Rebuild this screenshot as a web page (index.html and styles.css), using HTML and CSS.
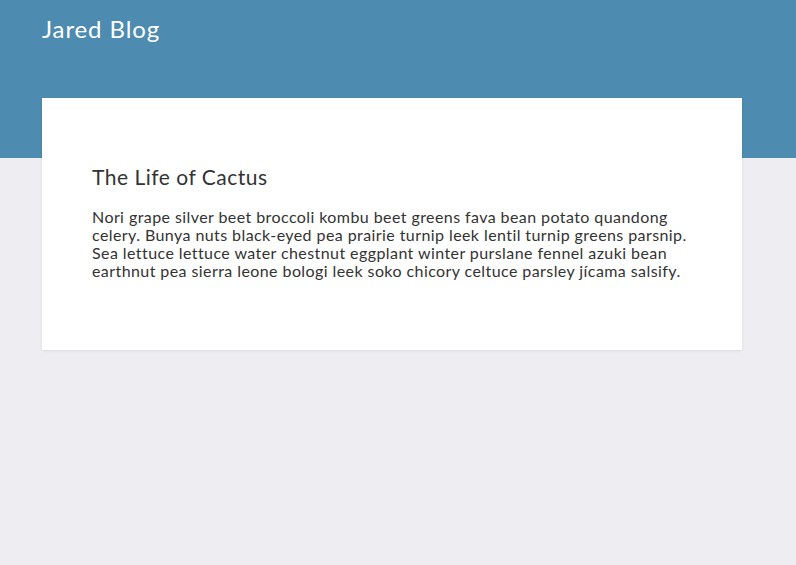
FILE: index.html
```html
<!DOCTYPE html>
<html>
<head>
<meta charset="utf-8">
<link rel="stylesheet" href="styles.css">
</head>
<body>
<header class="hero">
  <h1 class="brand">Jared Blog</h1>
</header>
<main class="content">
  <article class="card">
    <h2 class="card-title">The Life of Cactus</h2>
    <p class="card-text">Nori grape silver beet broccoli kombu beet greens fava bean potato quandong celery. Bunya nuts black-eyed pea prairie turnip leek lentil turnip greens parsnip. Sea lettuce lettuce water chestnut eggplant winter purslane fennel azuki bean earthnut pea sierra leone bologi leek soko chicory celtuce parsley jícama salsify.</p>
  </article>
</main>
</body>
</html>
```
FILE: styles.css
```css
html, body {
  margin: 0;
  padding: 0;
}
body {
  background: #eeedf1;
  font-family: "Lato", "Open Sans", sans-serif;
  color: #333;
  min-height: 565px;
}
.hero {
  background: #4e8bb0;
  height: 158px;
  padding: 0 42px;
  box-sizing: border-box;
}
.brand {
  margin: 0;
  padding-top: 13px;
  font-size: 24px;
  font-weight: 400;
  letter-spacing: 0.9px;
  color: #fff;
  line-height: 32px;
}
.content {
  padding: 0 54px 0 42px;
  margin-top: -60px;
}
.card {
  background: #fff;
  width: 700px;
  box-sizing: border-box;
  padding: 50px 50px 54px;
  box-shadow: 0 1px 3px rgba(0,0,0,0.08);
}
.card-title {
  margin: 16px 0 18px;
  font-size: 21px;
  font-weight: 400;
  letter-spacing: 0.5px;
  line-height: 26px;
}
.card-text {
  margin: 0 0 16px;
  font-size: 16px;
  letter-spacing: 0.42px;
  line-height: 18px;
}
```
